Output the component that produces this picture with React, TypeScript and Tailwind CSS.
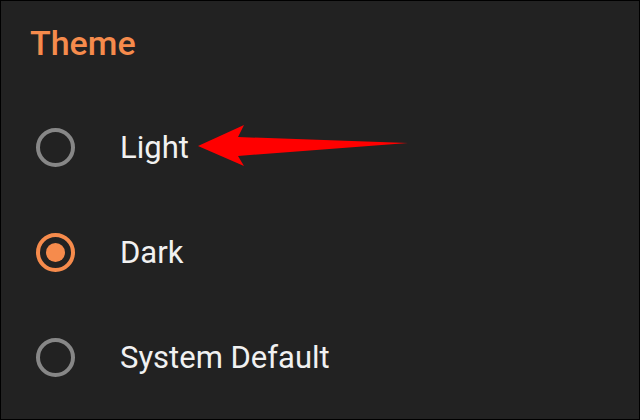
import React from "react";

function Radio({ checked }: { checked?: boolean }) {
  return checked ? (
    <div className="w-[39px] h-[39px] rounded-full border-[4px] border-[#f68b4c] flex items-center justify-center shrink-0">
      <div className="w-[19px] h-[19px] rounded-full bg-[#f68b4c]" />
    </div>
  ) : (
    <div className="w-[39px] h-[39px] rounded-full border-[4px] border-[#878787] shrink-0" />
  );
}

function Row({ label, checked }: { label: string; checked?: boolean }) {
  return (
    <div className="h-[105px] flex items-center pl-[35px] gap-[45px]">
      <Radio checked={checked} />
      <span className="text-[31px] leading-[31px] text-[#f1f1f1]" style={{ fontFamily: "Roboto, sans-serif" }}>
        {label}
      </span>
    </div>
  );
}

export default function App() {
  return (
    <div className="relative w-[640px] h-[420px] bg-[#222222] border border-black overflow-hidden" style={{ fontFamily: "Roboto, sans-serif" }}>
      <div className="h-[94px] pt-[22px] pl-[29px]">
        <div className="text-[34px] leading-[40px] font-medium text-[#f68b4c]">Theme</div>
      </div>
      <Row label="Light" />
      <Row label="Dark" checked />
      <Row label="System Default" />
      <svg className="absolute left-0 top-0" width="640" height="420" viewBox="0 0 640 420">
        <polygon points="197,145 243,124 237,136 407,142 237,155 243,165" fill="#ff0000" />
      </svg>
    </div>
  );
}
